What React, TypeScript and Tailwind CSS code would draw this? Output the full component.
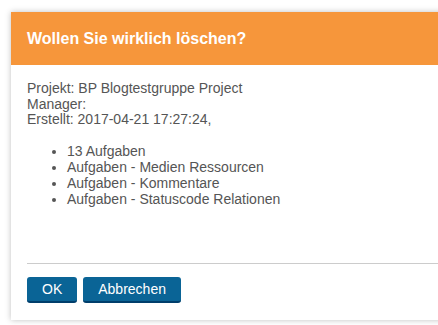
export default function App() {
    return (
        <div className="h-[325px] w-[438px] overflow-hidden bg-white pt-3 pl-[11px] font-['Liberation_Sans',Arial,sans-serif]">
            <div className="w-[460px] h-[308px] bg-white shadow-[0_0_6px_rgba(0,0,0,0.25)] flex flex-col">
                {/* Header */}
                <div className="h-[53px] bg-[#f6963b] flex items-center px-4">
                    <h2 className="text-white text-[16px] font-bold leading-none">Wollen Sie wirklich löschen?</h2>
                </div>

                {/* Body */}
                <div className="px-4 pt-[16px] text-[14px] leading-[15.5px] text-[#555] flex-grow">
                    <p>Projekt: BP Blogtestgruppe Project</p>
                    <p>Manager:</p>
                    <p>Erstellt: 2017-04-21 17:27:24,</p>
                    <ul className="list-disc pl-10 mt-[15px] leading-[16px] marker:text-[#555]">
                        <li>13 Aufgaben</li>
                        <li>Aufgaben - Medien Ressourcen</li>
                        <li>Aufgaben - Kommentare</li>
                        <li>Aufgaben - Statuscode Relationen</li>
                    </ul>
                </div>

                {/* Footer */}
                <div className="mx-4 border-t border-[#ccc] pt-[13px] pb-[17px] flex gap-[6px]">
                    <button className="h-[26px] px-[15px] bg-[#0a6496] border-b-2 border-[#003e6b] rounded-[3px] text-white text-[14px]">OK</button>
                    <button className="h-[26px] px-[15px] bg-[#0a6496] border-b-2 border-[#003e6b] rounded-[3px] text-white text-[14px]">Abbrechen</button>
                </div>
            </div>
        </div>
    );
}
